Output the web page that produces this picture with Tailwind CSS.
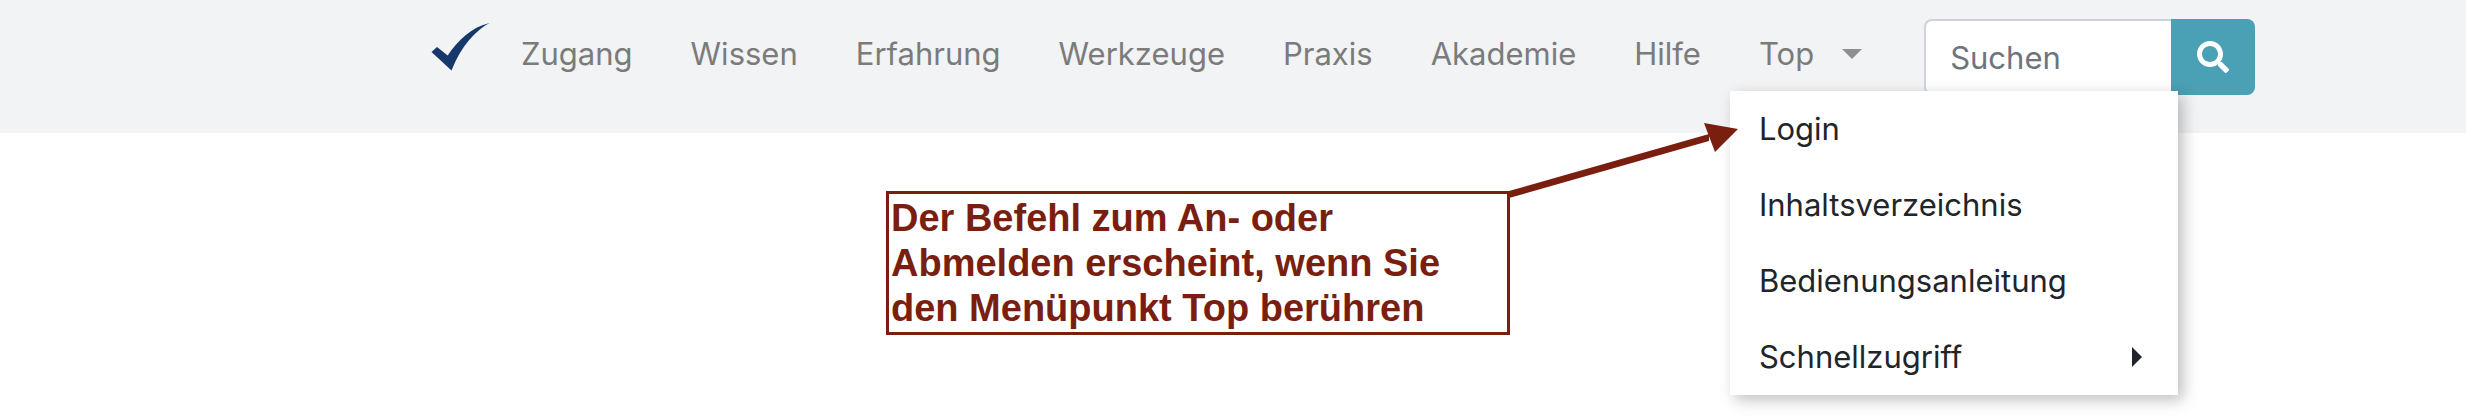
<!DOCTYPE html>
<html lang="de">
<head>
	<meta charset="UTF-8">
	<meta name="viewport" content="width=device-width, initial-scale=1.0">
	<title>Navigation</title>
	<script src="https://cdn.jsdelivr.net/npm/@tailwindcss/browser@4"></script>
</head>
<body class="min-h-screen bg-white font-['Inter',sans-serif] text-[31px] leading-9">

<header class="min-h-[133px] bg-[#f1f3f5] pt-[19px] pl-[430px]">
	<nav class="flex items-start text-[#7b7b7b]">
		<a href="#" aria-label="Startseite" class="pr-0.5">
			<svg class="w-[60px] h-[52px]" viewBox="0 0 60 52" fill="#17386b">
				<path d="M1.500 33 L7 28 L17.700 36.500 C28 21 42 8 59.500 4 C46 11 31 27 21.500 51.500 Z"/>
			</svg>
		</a>
		<ul class="flex">
			<li><a href="#" class="block px-[29px] pt-[17px] pb-[19px]">Zugang</a></li>
			<li><a href="#" class="block px-[29px] pt-[17px] pb-[19px]">Wissen</a></li>
			<li><a href="#" class="block px-[29px] pt-[17px] pb-[19px]">Erfahrung</a></li>
			<li><a href="#" class="block px-[29px] pt-[17px] pb-[19px]">Werkzeuge</a></li>
			<li><a href="#" class="block px-[29px] pt-[17px] pb-[19px]">Praxis</a></li>
			<li><a href="#" class="block px-[29px] pt-[17px] pb-[19px]">Akademie</a></li>
			<li><a href="#" class="block px-[29px] pt-[17px] pb-[19px]">Hilfe</a></li>
			<li class="relative">
				<a href="#" class="flex items-center gap-7 pl-[29px] pr-[62px] pt-[17px] pb-[19px]">
					Top
					<svg class="w-5 h-2.5" viewBox="0 0 20 10" fill="#8e8f92"><path d="M0 0 H20 L10 10 Z"/></svg>
				</a>
				<!-- Untermenü -->
				<ul class="absolute top-full left-0 z-10 w-[448px] bg-white text-[#212529] shadow-[5px_5px_14px_rgba(0,0,0,0.25)]">
					<li><a href="#" class="block px-[29px] py-5">Login</a></li>
					<li><a href="#" class="block px-[29px] py-5">Inhaltsverzeichnis</a></li>
					<li><a href="#" class="block px-[29px] py-5">Bedienungsanleitung</a></li>
					<li>
						<a href="#" class="flex items-center justify-between pl-[29px] pr-9 py-5">
							Schnellzugriff
							<svg class="w-2.5 h-5" viewBox="0 0 10 20" fill="#212529"><path d="M0 0 V20 L10 10 Z"/></svg>
						</a>
					</li>
				</ul>
			</li>
		</ul>
		<form class="flex">
			<input type="search" aria-label="Suchen" placeholder="Suchen" class="w-[247px] h-[76px] px-6 rounded-l-lg border-2 border-r-0 border-[#ced4da] bg-white placeholder:text-[#6c757d]">
			<button type="submit" aria-label="Suche starten" class="px-[26px] rounded-r-lg bg-[#4aa0b5]">
				<svg class="size-8" viewBox="0 0 512 512" fill="#fff">
					<path d="M505 442.7L405.3 343c-4.5-4.5-10.6-7-17-7H372c27.6-35.3 44-79.7 44-128C416 93.1 322.9 0 208 0S0 93.1 0 208s93.1 208 208 208c48.3 0 92.7-16.4 128-44v16.3c0 6.4 2.5 12.5 7 17l99.7 99.7c9.4 9.4 24.6 9.4 33.9 0l28.3-28.3c9.4-9.4 9.4-24.6.1-34zM208 336c-70.700 0-128-57.200-128-128 0-70.700 57.200-128 128-128 70.700 0 128 57.200 128 128 0 70.700-57.200 128-128 128z"/>
				</svg>
			</button>
		</form>
	</nav>
</header>

<main class="pt-[58px] pl-[886px]">
	<div class="relative w-[624px] border-3 border-[#7a1e0f] px-0.5 pt-0.5 pb-px font-['Liberation_Sans',sans-serif] text-[38px] leading-[45px] font-bold text-[#7a1e0f]">
		<p>Der Befehl zum An- oder<br>Abmelden erscheint, wenn Sie<br>den Menüpunkt Top berühren</p>
		<!-- Pfeil zum Login -->
		<svg class="absolute bottom-full left-full z-20 w-[230px] h-20 overflow-visible" viewBox="0 0 230 80" fill="#7a1e0f">
			<path d="M2 77 L202 20 V27 L2 84 Z M197 9 L231 15 L208 38 Z"/>
		</svg>
	</div>
</main>

</body>
</html>
